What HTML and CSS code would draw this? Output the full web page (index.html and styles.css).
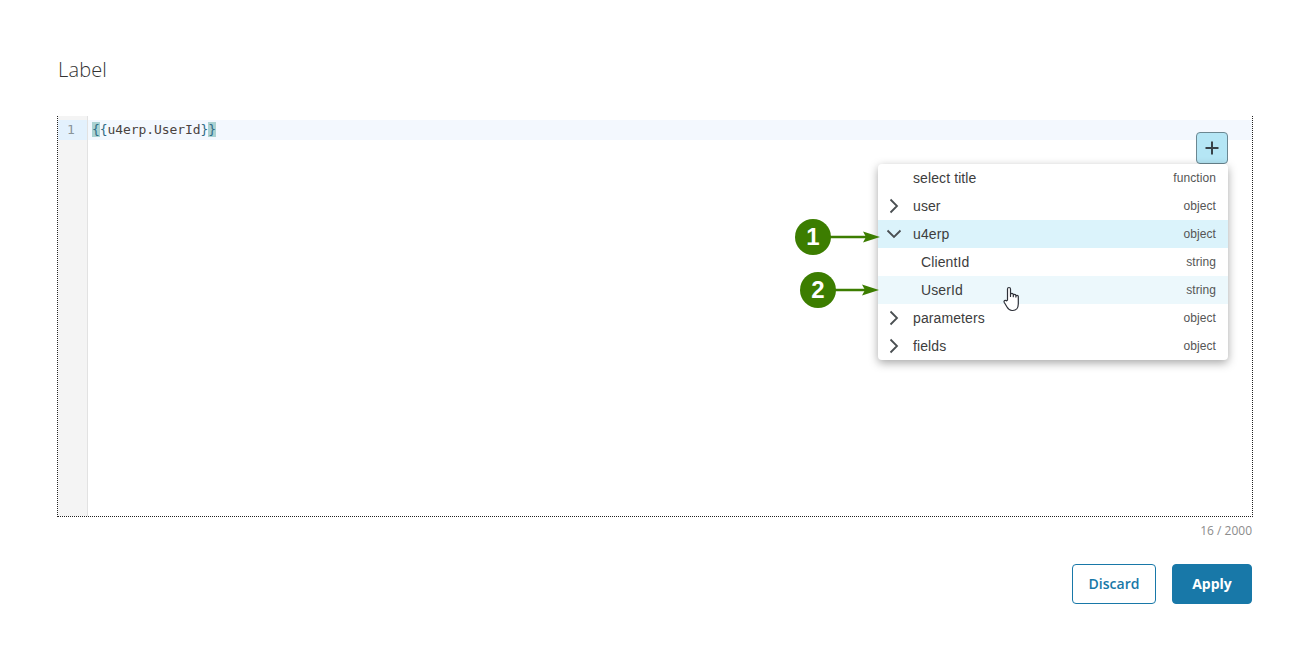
FILE: index.html
```html
<!DOCTYPE html>
<html lang="en">
<head>
<meta charset="utf-8">
<title>Label editor</title>
<link rel="stylesheet" href="styles.css">
</head>
<body>
<main class="page">
  <h1 class="label">Label</h1>
  <section class="editor">
    <div class="gutter"><div class="line-no">1</div></div>
    <div class="code"><div class="code-line"><span class="brace">{</span><span class="bracket">{</span><span class="ident">u4erp.UserId</span><span class="bracket">}</span><span class="brace">}</span></div></div>

    <button class="add" type="button" aria-label="Add">
      <svg width="14" height="14" viewBox="0 0 14 14"><path d="M7 .5v13M.5 7h13" stroke="#384248" stroke-width="2" fill="none"/></svg>
    </button>

    <div class="menu">
      <div class="row"><span class="chev"></span><span class="name">select title</span><span class="type">function</span></div>
      <div class="row"><span class="chev"><svg width="12" height="16" viewBox="0 0 12 16"><path d="M2.500 1.500 9 8l-6.500 6.500" class="chev-path"/></svg></span><span class="name">user</span><span class="type">object</span></div>
      <div class="row open"><span class="chev"><svg width="16" height="12" viewBox="0 0 16 12"><path d="M1.500 2.500 8 9l6.500-6.500" class="chev-path"/></svg></span><span class="name">u4erp</span><span class="type">object</span></div>
      <div class="row child"><span class="name">ClientId</span><span class="type">string</span></div>
      <div class="row child hover"><span class="name">UserId</span><span class="type">string</span></div>
      <div class="row"><span class="chev"><svg width="12" height="16" viewBox="0 0 12 16"><path d="M2.500 1.500 9 8l-6.500 6.500" class="chev-path"/></svg></span><span class="name">parameters</span><span class="type">object</span></div>
      <div class="row"><span class="chev"><svg width="12" height="16" viewBox="0 0 12 16"><path d="M2.500 1.500 9 8l-6.500 6.500" class="chev-path"/></svg></span><span class="name">fields</span><span class="type">object</span></div>
    </div>

    <div class="note note-one"><span class="badge">1</span><svg class="arrow" width="50" height="12" viewBox="0 0 50 12"><path d="M0 6h36" stroke="#3c7d00" stroke-width="2.500"/><path d="M50 6 33 .5 36 6l-3 5.500z" fill="#3c7d00"/></svg></div>
    <div class="note note-two"><span class="badge">2</span><svg class="arrow" width="44" height="12" viewBox="0 0 44 12"><path d="M0 6h30" stroke="#3c7d00" stroke-width="2.500"/><path d="M44 6 27 .5 30 6l-3 5.500z" fill="#3c7d00"/></svg></div>

    <svg class="cursor" width="17" height="26" viewBox="0 0 17 26"><path d="M4.500 14V3a1.500 1.500 0 0 1 3 0v7.500V8.700a1.400 1.400 0 0 1 2.800 0v2V9.600a1.300 1.300 0 0 1 2.600 0v1.500-.6a1.200 1.200 0 0 1 2.400 0V18c0 3.500-2 6.500-5.500 6.500H9c-2.500 0-3.800-1.500-5-3.500L1.300 16.500c-.9-1.600 1-3 2.300-1.600z" fill="#fff" stroke="#2d3038" stroke-width="1.200" stroke-linejoin="round"/></svg>
  </section>
  <div class="counter">16 / 2000</div>
  <div class="actions">
    <button class="btn ghost" type="button">Discard</button>
    <button class="btn solid" type="button">Apply</button>
  </div>
</main>
</body>
</html>
```
FILE: styles.css
```css
* { box-sizing: border-box; }
html, body { margin: 0; padding: 0; background: #fff; }
body { width: 1302px; height: 660px; overflow: hidden; font-family: "Open Sans", sans-serif; }

.page { padding: 56px 49px 0 57px; }

.label {
  margin: 0 0 32px 1px;
  font-size: 20px;
  line-height: 28px;
  font-weight: 300;
  letter-spacing: .15px;
  color: #333;
}

.editor {
  position: relative;
  display: flex;
  height: 401px;
  padding-top: 4px;
  border-left: 1px dotted #222;
  border-right: 1px dotted #222;
  border-bottom: 1px dotted #222;
  background: #fff;
}

.gutter {
  position: absolute;
  left: 0; top: 0; bottom: 0;
  width: 30px;
  padding-top: 4px;
  background: #f4f4f4;
  border-right: 1px solid #e2e2e2;
}
.line-no {
  height: 20px;
  width: 29px;
  padding-left: 9px;
  background: #e3f1fd;
  font: 13px/19px "DejaVu Sans Mono", monospace;
  color: #8a9499;
}
.code { flex: 1; margin-left: 30px; }
.code-line {
  height: 20px;
  padding-left: 4px;
  background: #f3f8fe;
  font: 13px/19px "DejaVu Sans Mono", monospace;
  letter-spacing: -.08px;
  color: #3a3f44;
  white-space: pre;
}
.brace { background: #aad2d2; color: #2f6c86; }
.bracket { color: #2f6c86; }
.ident { color: #4a4340; }

.add {
  position: absolute;
  left: 1138px; top: 16px;
  width: 32px; height: 32px;
  padding: 0;
  display: flex; align-items: center; justify-content: center;
  background: #b5e6f5;
  border: 1px solid #6b8791;
  border-radius: 4px;
}

.menu {
  position: absolute;
  left: 820px; top: 48px;
  width: 350px;
  background: #fff;
  border-radius: 4px;
  box-shadow: 0 3px 10px rgba(0,0,0,.35);
  font-family: "Liberation Sans", Arial, sans-serif;
  overflow: hidden;
}
.row {
  display: flex;
  align-items: center;
  height: 28px;
  padding: 0 12px 0 0;
}
.row.open { background: #dbf3fb; }
.row.hover { background: #ecf8fc; }
.row.child { padding-left: 43px; }
.chev { width: 32px; margin-right: 3px; flex: none; display: flex; justify-content: center; }
.chev-path { fill: none; stroke: #4a4f52; stroke-width: 1.800; }
.name { flex: 1; font-size: 14px; letter-spacing: .1px; color: #3d3d3d; }
.type { font-size: 12px; letter-spacing: .08px; color: #555; }

.note { position: absolute; display: flex; align-items: center; }
.note-one { left: 737px; top: 103px; }
.note-two { left: 742px; top: 156px; }
.badge {
  width: 36px; height: 36px;
  border-radius: 50%;
  background: #3c7d00;
  color: #fff;
  font: 700 24px/36px "Liberation Sans", Arial, sans-serif;
  text-align: center;
  flex: none;
}
.arrow { display: block; margin-left: -1px; }

.cursor { position: absolute; left: 945px; top: 170px; }

.counter {
  margin: 6px 1px 0 0;
  text-align: right;
  font-size: 12px;
  line-height: 16px;
  color: #8c8c8c;
}

.actions {
  display: flex;
  justify-content: flex-end;
  gap: 16px;
  margin: 25px 1px 0 0;
}
.btn {
  height: 40px;
  border-radius: 4px;
  font: 14px/20px "Open Sans", sans-serif;
  padding: 0;
}
.ghost { width: 84px; background: #fff; border: 1px solid #1878a8; color: #1878a8; font-weight: 600; }
.solid { width: 80px; background: #1878a8; border: 1px solid #1878a8; color: #fff; font-weight: 700; }
```
